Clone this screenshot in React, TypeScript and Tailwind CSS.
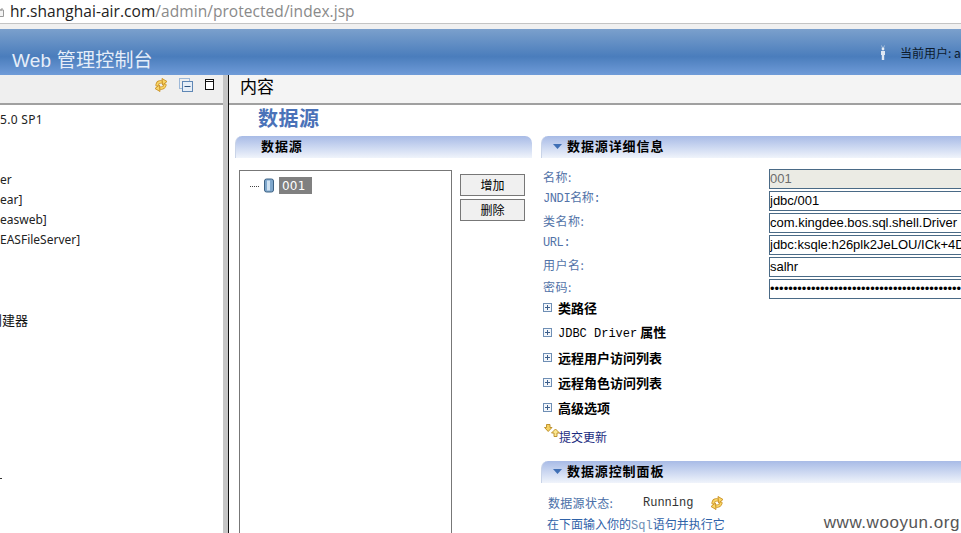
const CJK = "font-['Noto_Sans_CJK_SC',sans-serif]";
const MONO = "font-['Liberation_Mono','Noto_Sans_CJK_SC',monospace]";
const ARIAL = "font-['Liberation_Sans','Noto_Sans_CJK_SC',sans-serif]";
const TREE = "font-['Noto_Sans','Noto_Sans_CJK_SC',sans-serif]";
const TAHOMA = "font-['DejaVu_Sans','Noto_Sans_CJK_SC',sans-serif]";

function Sync({ className = "" }: { className?: string }) {
  return (
    <svg width="16" height="16" viewBox="0 0 16 16" className={className}>
      <g fill="none" strokeLinecap="round" strokeLinejoin="round">
        <path d="M4 8 C4.5 5.5 6.5 4.5 9 5" stroke="#c98f1f" strokeWidth="3.2" />
        <path d="M12 8 C11.5 10.5 9.5 11.5 7 11" stroke="#c98f1f" strokeWidth="3.2" />
        <path d="M4 8 C4.5 5.5 6.5 4.5 9 5" stroke="#f8d568" strokeWidth="1.6" />
        <path d="M12 8 C11.5 10.5 9.5 11.5 7 11" stroke="#f8d568" strokeWidth="1.6" />
      </g>
      <path d="M9 1.5 L14 4.5 L9.5 8 Z" fill="#f8d568" stroke="#c98f1f" strokeWidth="0.9" strokeLinejoin="round" />
      <path d="M7 14.5 L2 11.5 L6.5 8 Z" fill="#f8d568" stroke="#c98f1f" strokeWidth="0.9" strokeLinejoin="round" />
    </svg>
  );
}

function Updown() {
  return (
    <svg width="16" height="14" viewBox="0 0 16 14" className="shrink-0">
      <path d="M2.5 0.5 H6 V3.5 H8 L4.2 7.5 L0.5 3.5 H2.5 Z" fill="#f6d264" stroke="#b98a22" strokeWidth="0.9" strokeLinejoin="round" />
      <path d="M10 12.5 H13 V9 H15.5 L11.5 5 L7.5 9 H10 Z" fill="#fbe68f" stroke="#b98a22" strokeWidth="0.9" strokeLinejoin="round" />
    </svg>
  );
}

function Plus() {
  return (
    <svg width="9" height="9" viewBox="0 0 9 9" className="shrink-0">
      <rect x="0.5" y="0.5" width="8" height="8" fill="#f4f7fb" stroke="#6f8fb5" />
      <path d="M2 4.5 H7 M4.5 2 V7" stroke="#3c5f8c" />
    </svg>
  );
}

function Arrow() {
  return (
    <svg width="9" height="5" viewBox="0 0 9 5" className="shrink-0">
      <path d="M0 0 H9 L4.5 5 Z" fill="#3f6fb5" />
    </svg>
  );
}

function SectionHeader({ title, arrow, className = "" }: { title: string; arrow?: boolean; className?: string }) {
  return (
    <div className={`flex h-[22px] items-center rounded-t-[7px] border-l border-[#c9d4e8] bg-gradient-to-b from-[#a8bbe6] to-[#f0f4fb] pb-[2px] ${className}`}>
      {arrow ? <div className="ml-[11px] mr-[5px] flex"><Arrow /></div> : <div className="w-[25px]" />}
      <span className={`${CJK} text-[13px] font-bold tracking-[0.9px] text-black`}>{title}</span>
    </div>
  );
}

function Field({ label, value, mono, disabled, small }: { label: string; value: string; mono?: boolean; disabled?: boolean; small?: boolean }) {
  return (
    <div className="flex h-[22px] items-center">
      <div className={`w-[228px] shrink-0 pb-[5px] pl-[2px] ${mono ? MONO : CJK} text-[12px] text-[#5273a8] ${small ? "tracking-[-0.4px]" : "tracking-[0.5px]"}`}>{label}</div>
      <div className={`flex h-[20px] min-w-0 flex-1 items-center overflow-hidden whitespace-nowrap border border-[#4a6a86] ${ARIAL} text-[13px] ${disabled ? "bg-[#ebebe4] text-[#6d6d6d]" : "bg-white text-black"}`}>{value}</div>
    </div>
  );
}

function Expand({ children }: { children: React.ReactNode }) {
  return (
    <div className="flex h-[25px] items-center gap-[6px] pl-[2px]">
      <Plus />
      <span className={`${CJK} text-[13px] font-bold text-black`}>{children}</span>
    </div>
  );
}

function TreeLine({ children, className = "" }: { children: React.ReactNode; className?: string }) {
  return <div className={`h-[20px] whitespace-nowrap ${TREE} text-[12px] leading-[20px] text-[#222] ${className}`}>{children}</div>;
}

export default function App() {
  return (
    <div className="relative flex h-[533px] w-[961px] flex-col overflow-hidden bg-white">
      {/* address bar */}
      <div className="flex h-[23px] shrink-0 items-center bg-white font-['Open_Sans',sans-serif] text-[15.5px] tracking-[0.05px]">
        <svg width="4" height="11" viewBox="0 0 4 11" className="mr-[6px] shrink-0">
          <path d="M-2 4 H2 V2 M-2 4 H3.5 V10.5 H-2" fill="#f4f4f4" stroke="#9a9a9a" />
        </svg>
        <span className="text-[#222]">hr.shanghai-air.com</span>
        <span className="text-[#8a8a8a]">/admin/protected/index.jsp</span>
      </div>
      <div className="h-[6px] shrink-0 border-t border-[#c4c4c4] bg-[#f0f0f0]" />

      {/* blue header */}
      <div className="flex h-[46px] shrink-0 items-end justify-between whitespace-nowrap bg-gradient-to-b from-[#7ba0cc] via-[#4a7dbc] via-60% to-[#6f9bd8]">
        <span className={`pb-[2px] pl-[12px] ${ARIAL} text-[19px] leading-[24px] tracking-[0.2px] text-[#e6eef9]`}>Web 管理控制台</span>
        <div className="flex items-center pb-[14px]">
          <svg width="8" height="16" viewBox="0 0 8 16" className="mr-[13px]">
            <path d="M2.5 0.5 L3.5 3 M5.5 0.5 L4.5 3" stroke="#b9cbe0" strokeWidth="0.8" />
            <circle cx="4" cy="4" r="1.4" fill="#e9eff7" />
            <path d="M2 6 H6 V10 H5.2 V15 H2.8 V10 H2 Z" fill="#dfe8f4" />
          </svg>
          <span className={`w-[61px] overflow-hidden ${CJK} text-[12px] leading-[16px] text-[#0c1a2c]`}>当前用户: admin</span>
        </div>
      </div>

      {/* body */}
      <div className="flex min-h-0 flex-1">
        {/* left panel */}
        <div className="flex w-[223px] shrink-0 flex-col">
          <div className="flex h-[30px] shrink-0 items-start justify-end border-b-2 border-[#a0a0a0] bg-[#efefef] pr-[9px] pt-[2px]">
            <Sync className="mr-[10px]" />
            <svg width="14" height="14" viewBox="0 0 14 14" className="mr-[12px] mt-[1px]">
              <rect x="0.5" y="0.5" width="10" height="10" fill="none" stroke="#9db8d8" />
              <rect x="3.5" y="3.5" width="10" height="10" fill="#e6eef7" stroke="#5f87b5" />
              <path d="M5.5 8.5 H11.5" stroke="#2f5480" />
            </svg>
            <svg width="9" height="11" viewBox="0 0 9 11" className="mt-[2px]">
              <rect x="0.5" y="0.5" width="8" height="10" fill="#fff" stroke="#111" />
              <path d="M0.5 2.5 H8.5" stroke="#111" />
            </svg>
          </div>
          <div className="min-h-0 flex-1 overflow-hidden pt-[5px]">
            <TreeLine className="tracking-[0.3px]">5.0 SP1</TreeLine>
            <div className="h-[40px]" />
            <TreeLine>er</TreeLine>
            <TreeLine>ear]</TreeLine>
            <TreeLine>easweb]</TreeLine>
            <TreeLine>EASFileServer]</TreeLine>
            <div className="h-[60px]" />
            <div className={`-ml-[11px] h-[20px] whitespace-nowrap ${CJK} text-[13px] leading-[20px] text-[#111]`}>创建器</div>
            <div className="h-[148px]" />
            <div className="h-px w-[2px] bg-[#333]" />
          </div>
        </div>

        {/* splitter */}
        <div className="w-[5px] shrink-0 bg-[#c6c6c6]" />
        <div className="w-px shrink-0 bg-[#111]" />

        {/* right panel */}
        <div className="flex min-w-0 flex-1 flex-col">
          <div className={`flex h-[30px] shrink-0 items-start border-b-2 border-[#a0a0a0] bg-[#f4f4f4] pl-[11px] ${CJK} text-[17px] leading-[22px] text-black`}>内容</div>
          <div className={`h-[31px] shrink-0 pl-[29px] ${CJK} text-[20px] font-semibold leading-[26px] tracking-[0.5px] text-[#4a72b8]`}>数据源</div>

          <div className="flex min-h-0 flex-1 gap-[9px] pl-[6px]">
            {/* data source list column */}
            <div className="flex w-[297px] shrink-0 flex-col">
              <SectionHeader title="数据源" />
              <div className="flex min-h-0 flex-1 pl-[4px] pt-[12px]">
                <div className="flex h-[400px] w-[213px] shrink-0 items-start gap-[3px] border border-[#777] pl-[10px] pt-[7px]">
                  <span className="mt-[8px] w-[9px] border-t border-dotted border-[#444]" />
                  <svg width="10" height="15" viewBox="0 0 10 15" className="ml-[2px]">
                    <rect x="0.5" y="1" width="9" height="13" rx="2" fill="#7fa7cc" stroke="#3d6284" />
                    <rect x="3" y="2.5" width="3" height="10" fill="#cfe2f2" />
                  </svg>
                  <span className={`ml-[2px] -mt-[1px] flex h-[17px] w-[33px] items-center bg-[#808080] pl-[3px] ${TAHOMA} text-[12px] tracking-[0.2px] text-white`}>001</span>
                </div>
                <div className="ml-[8px] flex flex-col gap-[3px] pt-[4px]">
                  {["增加", "删除"].map((t) => (
                    <div key={t} className={`flex h-[22px] w-[65px] items-center justify-center border border-[#777] bg-[#f0f0f0] ${CJK} text-[12px] text-black`}>{t}</div>
                  ))}
                </div>
              </div>
            </div>

            {/* detail column */}
            <div className="min-w-0 flex-1 -mr-[20px]">
              <SectionHeader title="数据源详细信息" arrow />
              <div className="pt-[10px]">
                <Field label="名称:" value="001" disabled />
                <Field label="JNDI名称:" value="jdbc/001" mono small />
                <Field label="类名称:" value="com.kingdee.bos.sql.shell.Driver" />
                <Field label="URL:" value="jdbc:ksqle:h26plk2JeLOU/ICk+4DxKmlBtRQ" mono small />
                <Field label="用户名:" value="salhr" />
                <Field label="密码:" value="••••••••••••••••••••••••••••••••••••••••••••••" />
              </div>
              <div className="-mt-[5px]">
                <Expand>类路径</Expand>
                <Expand><span className={`${MONO} font-normal text-[12px]`}>JDBC Driver</span> 属性</Expand>
                <Expand>远程用户访问列表</Expand>
                <Expand>远程角色访问列表</Expand>
                <Expand>高级选项</Expand>
              </div>
              <div className={`flex h-[24px] items-end pl-[3px] ${CJK} text-[12px] leading-[17px] text-[#1a2a80]`}>
                <div className="mb-[6px]"><Updown /></div>
                <span className="-ml-[1px] mb-[-1px]">提交更新</span>
              </div>
              <div className="pt-[17px]">
                <SectionHeader title="数据源控制面板" arrow />
              </div>
              <div className={`flex h-[38px] items-center pl-[7px] pt-[1px] ${CJK} text-[12px] text-[#4a6fa8]`}>
                <span className="w-[95px] tracking-[0.3px]">数据源状态:</span>
                <span className={`w-[66px] ${MONO} text-[12px] text-[#333]`}>Running</span>
                <Sync />
              </div>
              <div className={`-mt-[5px] pl-[6px] ${CJK} text-[12px] leading-[16px] text-[#2f62a8]`}>
                在下面输入你的<span className={`${MONO} text-[#6f8fb5]`}>Sql</span>语句并执行它
              </div>
            </div>
          </div>
        </div>
      </div>

      <div className={`absolute bottom-[1px] right-[1px] ${ARIAL} text-[17px] leading-[18px] tracking-[0.55px] text-[#555]`}>www.wooyun.org</div>
    </div>
  );
}
